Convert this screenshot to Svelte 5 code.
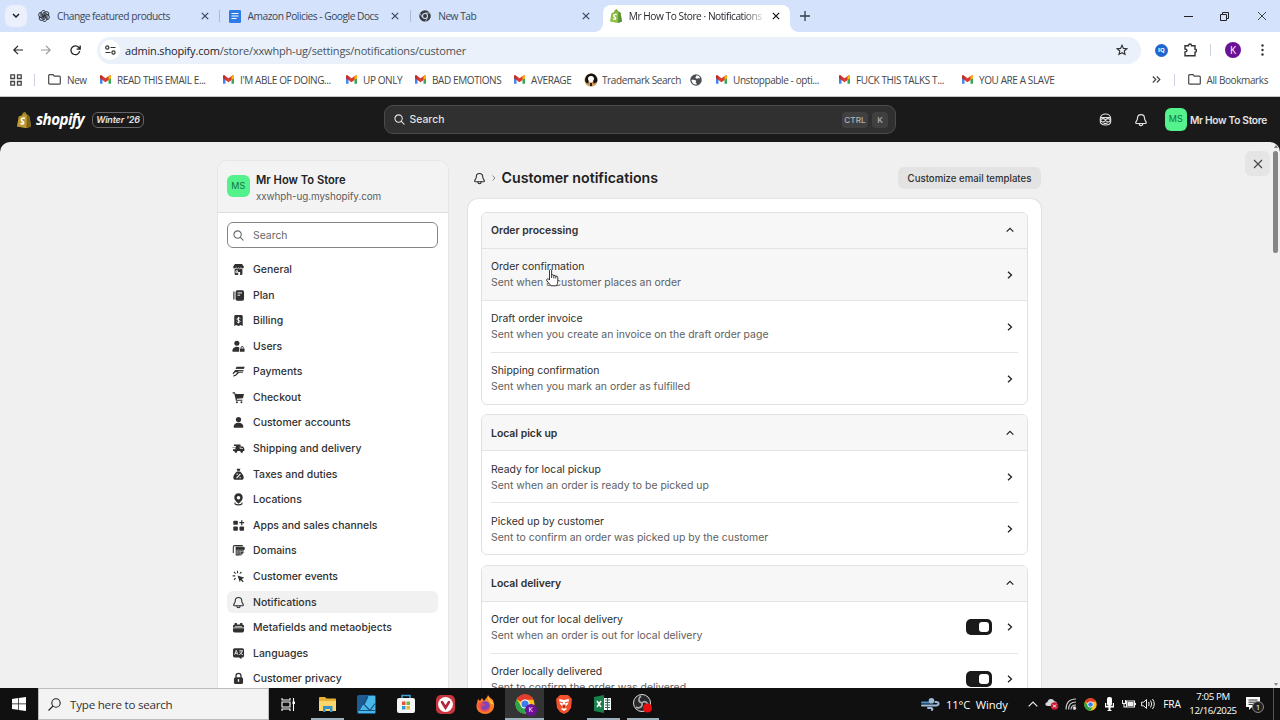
<script>
  const gmail = '<svg width="11" height="9" viewBox="0 0 22 17"><path d="M0 3v14h5V7z" fill="#4285f4"/><path d="M17 7v10h5V3z" fill="#34a853"/><path d="M0 2v4l11 8 11-8V2c0-2-2-2.6-4-1.200L11 6 4 .8C2-.6 0 0 0 2z" fill="#d93a32"/><path d="M17 2l3-2q2 .3 2 3v3l-5 3.500z" fill="#fbbc04"/><path d="M0 2q0-2 2-2l3 2v7L0 6z" fill="#b92f2b"/></svg>';
  const folder = '<svg width="13" height="11" viewBox="0 0 13 11" fill="none" stroke="#474747" stroke-width="1.200"><path d="M.7 9.200V1.700q0-1 1-1H5l1.300 1.500h5q1 0 1 1v6q0 1-1 1H1.700q-1 0-1-1z"/></svg>';
  const chromeLogo = '<svg width="14" height="14" viewBox="0 0 24 24"><circle cx="12" cy="12" r="11.500" fill="#fbc116"/><path d="M12 12L2 6.300a11.500 11.500 0 0 1 20-.1L21.500 7H12z" fill="#e33b2e"/><path d="M2 6.300a11.500 11.500 0 0 0 9.500 17.200L16.500 15l-9 0z" fill="#2ba24c"/><circle cx="12" cy="12" r="5.500" fill="#fff"/><circle cx="12" cy="12" r="4.300" fill="#3b7ded"/></svg>';
  const monoChrome = '<svg width="12" height="12" viewBox="0 0 24 24"><circle cx="12" cy="12" r="11.500" fill="#35383d"/><path d="M12 6h10M6.800 15L1.800 6.500M17.200 15l-5 8.500" stroke="#d4e3fb" stroke-width="1.500"/><circle cx="12" cy="12" r="6" fill="#d4e3fb"/><circle cx="12" cy="12" r="3.900" fill="#35383d"/></svg>';
  const petal = 'M12 12L6.500 8.800V5.500a4.600 4.600 0 0 1 8.500-2.300L9.500 6.500v7';
  const gpt = `<svg width="12" height="12" viewBox="0 0 24 24" fill="none" stroke="#333a43" stroke-width="1.900">${[0, 60, 120, 180, 240, 300].map((r) => `<path d="${petal}" transform="rotate(${r} 12 12)"/>`).join('')}</svg>`;
  const docs = '<svg width="12" height="13" viewBox="0 0 12 13"><rect width="12" height="13" rx="1.300" fill="#2f7be6"/><path d="M2.500 3.500h7M2.500 6h7M2.500 8.500h5" stroke="#fff" stroke-width="1.200"/></svg>';
  const bag = (a, b) => `<svg width="12" height="14" viewBox="0 0 24 28"><path d="M3 8l5-1.500C9 2 12 0 14.500 1l2 3.500L18 5l3 2.500L24 25l-8 3L0 25z" fill="${a}"/><path d="M17 5l4 2.500L24 25l-8 3z" fill="${b}"/><path d="M8.500 7.500C9 4.500 11 2 13.500 2.500L14.500 6" fill="none" stroke="${b}" stroke-width="1.200"/><path d="M13.500 11.500C10 9.800 7 11.500 7.500 14c.4 2.200 4.200 2.600 4 5-.2 2-3 2.200-5.500.5" fill="none" stroke="#fff" stroke-width="2.600"/></svg>`;
  const bell = (c, s) => `<svg width="${s}" height="${s}" viewBox="0 0 20 20" fill="none" stroke="${c}" stroke-width="1.700" stroke-linejoin="round" stroke-linecap="round"><path d="M10 2.300C6.700 2.300 5 4.800 5 7.500c0 3.500-2.500 4.400-2.500 6.300 0 .9.600 1.200 1.300 1.200h12.400c.7 0 1.300-.3 1.300-1.200 0-1.900-2.500-2.800-2.500-6.300 0-2.700-1.700-5.200-5-5.200z"/><path d="M7.500 15c0 1.700 1 3 2.500 3s2.500-1.300 2.500-3"/></svg>`;
  const glass = (c, s) => `<svg width="${s}" height="${s}" viewBox="0 0 12 12" fill="none" stroke="${c}" stroke-width="1.200" stroke-linecap="round"><circle cx="5" cy="5" r="4"/><path d="M8 8l3 3"/></svg>`;

  const tabs = [
    { icon: gpt, text: 'Change featured products' },
    { icon: docs, text: 'Amazon Policies - Google Docs' },
    { icon: monoChrome, text: 'New Tab' },
    { icon: bag('#8fbe46', '#5c9138'), text: 'Mr How To Store · Notifications', active: true }
  ];

  const trade = '<svg width="14" height="14" viewBox="0 0 28 28"><circle cx="14" cy="14" r="13" fill="#d3a264"/><path d="M14 1a13 13 0 0 0-9 21l4 2V9h9l1 13 4 1A13 13 0 0 0 14 1z" fill="#161310"/><path d="M2 18q12 8 24 0-3 9-12 9T2 18z" fill="#d3a264"/><path d="M14 6c-4 0-6 2.500-6 5.500 0 3 3 4 3.500 7h5c.5-3 3.500-4 3.500-7C20 8.500 18 6 14 6z" fill="#fff"/><path d="M12 20h4v6h-4z" fill="#2b2118"/></svg>';
  const globe = '<svg width="12" height="12" viewBox="0 0 24 24"><circle cx="12" cy="12" r="11.500" fill="#4b4f54"/><path d="M3 12c4-1 6 1 9 1 1 2-1 3-1 4 2 1 3 2 2 4-5 1-10-3-10-9zM12 4c3-2 7 0 8 4-2 2-3 0-5 1-1 1-3 0-4-1-1-2 2-2 1-4z" fill="#fff"/></svg>';
  const bookmarks = [
    { icon: folder, text: 'New', w: 52 },
    { icon: gmail, text: 'READ THIS EMAIL E...', w: 123 },
    { icon: gmail, text: "I'M ABLE OF DOING...", w: 123 },
    { icon: gmail, text: 'UP ONLY', w: 69 },
    { icon: gmail, text: 'BAD EMOTIONS', w: 99 },
    { icon: gmail, text: 'AVERAGE', w: 70 },
    { icon: trade, text: 'Trademark Search', w: 106 },
    { icon: globe, text: '', w: 26 },
    { icon: gmail, text: 'Unstoppable - opti...', w: 123 },
    { icon: gmail, text: 'FUCK THIS TALKS T...', w: 123 },
    { icon: gmail, text: 'YOU ARE A SLAVE', w: 100 }
  ];

  const nav = [
    ['General', '<path d="M4.500 1.500h11L18.500 6c0 1.500-1 2.500-2.500 2.800V16.500a2 2 0 0 1-2 2h-1.500v-4.500h-3v4.500H6a2 2 0 0 1-2-2V8.800C2.500 8.500 1.500 7.500 1.500 6z"/><path d="M2 7.500q2.300 3 4.300 0 1.800 3 3.700 0 1.900 3 3.700 0 2 3 4.300 0M6 12h2.500v3H6z" fill="none" stroke="#fff" stroke-width="1.300"/>'],
    ['Plan', '<path d="M2 4h1.800v12H2zM8 2h8a2.500 2.500 0 0 1 2.500 2.500v11A2.500 2.500 0 0 1 16 18H8a2.500 2.500 0 0 1-2.500-2.500v-11A2.500 2.500 0 0 1 8 2z"/><path d="M8.500 6h7M8.500 9.500h4" stroke="#fff" stroke-width="1.500"/>'],
    ['Billing', '<path d="M3.500 3.500Q3.500 1.500 5.500 1.500h9q2 0 2 2V18.500l-3.200-1.500-3.300 1.500L6.700 17l-3.200 1.500z"/><path d="M12.800 7C11.500 5.500 7.500 6 7.500 8s5 1.200 5 3.300-3.800 2.300-5.200.6M10 4.500v10" fill="none" stroke="#fff" stroke-width="1.400"/>'],
    ['Users', '<circle cx="7.500" cy="5" r="3.900"/><path d="M.5 17c0-4 3-6.500 7-6.500 1.700 0 3 .4 3.800 1.200L11 18H1.500q-1 0-1-1zM12.300 13h7v5h-7z"/><path d="M14 13v-1.500q0-1.500 1.700-1.500t1.700 1.500V13" fill="none" stroke="#303030" stroke-width="1.500"/>'],
    ['Payments', '<path d="M7 2.500h12.500l-1.300 3.700H5.500zM5 7.500h13l-1.500 4.500H11L5.500 17 1.500 17.500l1-1.900 3-.8 3-3.600H5l-3 3-1.200-1.700z"/><path d="M6 6.700h12M9 9.800h8" stroke="#fff"/>'],
    ['Checkout', '<path d="M1 2h3.500l.8 2.500H18.500L16.800 11l-9.600 1 .3 1.300H16V15H6L3.500 3.700H1z"/><circle cx="7.500" cy="17.300" r="1.500"/><circle cx="14.500" cy="17.300" r="1.500"/>'],
    ['Customer accounts', '<circle cx="10" cy="5.500" r="4"/><path d="M2.500 17c0-4 2.500-6.500 7.500-6.500s7.500 2.500 7.500 6.500q0 1.200-1.200 1.200H3.700q-1.200 0-1.200-1.200z"/>'],
    ['Shipping and delivery', '<path d="M3 4h10l.6 3H17l2 3.500V14h-2a2 2 0 0 1-4 0H8a2 2 0 0 1-4 0H1.500V11H5V9H1V7.500h5V6H3z"/><circle cx="6" cy="14.500" r="1.900"/><circle cx="15" cy="14.500" r="1.900"/><path d="M1 9h5M12.500 7v3H17" fill="none" stroke="#fff"/>'],
    ['Taxes and duties', '<path d="M7 1h6l-1.500 3.500h-3zM7.500 5.500h5C15 8 18 11 18 14.500c0 2.500-1.500 3.500-3 3.500H5c-1.500 0-3-1-3-3.500C2 11 5 8 7.500 5.500z"/><path d="M13 9l-6 6.500M7 9.500h1.800M11.500 15h2" stroke="#fff" stroke-width="1.700"/>'],
    ['Locations', '<path fill-rule="evenodd" d="M10 .5C6 .5 3.500 3.300 3.500 7c0 3.600 3 6.500 6.500 9.500 3.500-3 6.500-5.900 6.500-9.500 0-3.700-2.500-6.500-6.500-6.500zm0 4a2.700 2.700 0 1 1 0 5.400 2.700 2.700 0 0 1 0-5.400z"/><path d="M5 14.500q-2 3.700 5 3.700t5-3.700" fill="none" stroke="#303030" stroke-width="1.700"/>'],
    ['Apps and sales channels', '<rect x="2" y="2.500" width="7" height="6.500" rx="1.500"/><rect x="2" y="11.500" width="7" height="6.500" rx="1.500"/><rect x="11.500" y="11.500" width="7" height="6.500" rx="1.500"/><path d="M15 2v7.500M11.300 5.700h7.400" stroke="#303030" stroke-width="1.900"/>'],
    ['Domains', '<path d="M2 14V4.500Q2 2.500 4 2.500h12.500M18.500 9V6q0-1-1-1h-11v12h4" fill="none" stroke="#303030" stroke-width="1.600"/><path d="M6 5h13v4H6z"/><path d="M8 9h10v3l-5 6-5-1z" opacity=".75"/><path d="M12 11l7.500 2-3 1.600-1.500 3.400z" stroke="#fff" stroke-width=".6"/>'],
    ['Customer events', '<path d="M8.500 8.500L19 12l-4 2 3 3.500-1.500 1.300-3-3.300L12 19z"/><path d="M8.500 1v4M3 3l2.600 2.600M1 9h4M3 15l2.600-2.600M14.500 3L12 5.600" stroke="#303030" stroke-width="1.700"/>'],
    ['Notifications', ''],
    ['Metafields and metaobjects', '<path d="M4 3h3.500v2.500h5V3H16v2.500q2.500.3 2.500 2.500v2h-17V8q0-2.200 2.500-2.500zM1.500 11.300h17V15q0 2.500-2.500 2.500H4Q1.500 17.500 1.500 15z"/><path d="M4.500 8.500h11" stroke="#fff"/>'],
    ['Languages', '<path d="M4 2h12q2.500 0 2.500 2.500v9Q18.500 16 16 16h-1.500v3L11 16H4q-2.500 0-2.500-2.500v-9Q1.500 2 4 2z"/><path d="M4 12l2.500-7L9 12M5 10h3M11 6h6M14 4.500V6M16 6q-1 4-5 6M12 8q1.500 3 5 4" fill="none" stroke="#fff" stroke-width="1.200"/>'],
    ['Customer privacy', '<rect x="3" y="8" width="14" height="10.500" rx="2.500"/><path d="M6.200 9V5.500Q6.200 2 10 2t3.800 3.500V9" fill="none" stroke="#303030" stroke-width="2"/><path d="M10 11v4" stroke="#fff" stroke-width="2"/>']
  ];

  const sections = [
    { title: 'Order processing', rows: [
      { t: 'Order confirmation', d: 'Sent when a customer places an order', hover: true },
      { t: 'Draft order invoice', d: 'Sent when you create an invoice on the draft order page' },
      { t: 'Shipping confirmation', d: 'Sent when you mark an order as fulfilled' } ] },
    { title: 'Local pick up', rows: [
      { t: 'Ready for local pickup', d: 'Sent when an order is ready to be picked up' },
      { t: 'Picked up by customer', d: 'Sent to confirm an order was picked up by the customer' } ] },
    { title: 'Local delivery', rows: [
      { t: 'Order out for local delivery', d: 'Sent when an order is out for local delivery', toggle: true },
      { t: 'Order locally delivered', d: 'Sent to confirm the order was delivered', toggle: true } ] }
  ];

  const apps = [
    { icon: '<svg width="15" height="13" viewBox="0 0 15 13" fill="none" stroke="#fff" stroke-width="1.100"><path d="M1 0v2h8V0M1 13v-2h8v2M1 4h8v5H1zM12.500 0v13"/><path d="M11.500 3.500h2.500v2.500h-2.500z" fill="#fff" stroke="none"/></svg>' },
    { icon: '<svg width="17" height="15" viewBox="0 0 17 15"><path d="M0 1q0-1 1-1h5l1.500 1.500H16q1 0 1 1V14H0z" fill="#e9b035"/><path d="M0 4h17v10H0z" fill="#fbd66b"/><path d="M4 15V9h9.500v6H11v-3H6.500v3z" fill="#3b91cc"/></svg>', state: 'open' },
    { icon: '<svg width="19" height="19" viewBox="0 0 19 19"><rect width="19" height="19" rx="2" fill="#1c5c93"/><path d="M10.500 1H18v17H1.500L1 16z" fill="#48b8ea"/><path d="M10.500 1L2 15.500h16M11 1.500l-4 8 6 6 5-7" fill="none" stroke="#1a4f80" stroke-width="1.200"/></svg>' },
    { icon: '<svg width="20" height="20" viewBox="0 0 20 20"><path d="M6 5V1.500h8V5" fill="none" stroke="#3aa4d8" stroke-width="1.500"/><rect x="1" y="4" width="18" height="15" rx="2" fill="#f4f5f7"/><path d="M6 7.500h3.500V11H6z" fill="#e65332"/><path d="M10.500 7.500H14V11h-3.500z" fill="#75b83b"/><path d="M6 12h3.500v3.500H6z" fill="#2b9ad6"/><path d="M10.500 12H14v3.500h-3.500z" fill="#f3b52a"/></svg>' },
    { icon: '<svg width="19" height="19" viewBox="0 0 19 19"><rect width="19" height="19" rx="5" fill="#c7353f"/><circle cx="9.500" cy="9.500" r="7.400" fill="#fff"/><path d="M6 7l3.500 5.700L13 7" fill="none" stroke="#b32636" stroke-width="2.600" stroke-linecap="round"/></svg>' },
    { icon: '<svg width="19" height="19" viewBox="0 0 19 19"><path d="M2 4l2 2 2-3 2 3c2-3 3-3 4-6 2 3 4 4 5 5l1 4c1 6-4 10-9 10C3 19-1 14 1 8z" fill="#ff7b26"/><path d="M12 1c1 4 5 4 6 9-1-1-2-1-3-1-1-3-4-3-3-8z" fill="#ffc337"/><circle cx="9" cy="11" r="4.800" fill="#7b46bb"/><path d="M1 9c4-3 7-1 9 1-3 0-3 3-6 3 3 3 7 2 10-2 1 8-11 9-13-2z" fill="#fb4452" opacity=".7"/></svg>' },
    { icon: '', state: 'active' },
    { icon: '<svg width="16" height="19" viewBox="0 0 16 19"><path d="M4 0h8l2 2 2 2-1 9-3 4-4 2-4-2-3-4L0 4l2-2z" fill="#f3502b"/><path d="M3 4l5 1 5-1-1 5-3 3 2 2-3 2-3-2 2-2-3-3z" fill="#fff"/><path d="M4 7l3 1M12 7L9 8M7 10h2v3H7z" stroke="#f3502b" stroke-width="1.200"/></svg>' },
    { icon: '<svg width="18" height="18" viewBox="0 0 18 18"><path d="M9 3h8v12H9z" fill="#fff"/><path d="M11 5h5M11 7.500h5M11 10h5M11 12.500h5M13.500 3v12" stroke="#20784a"/><path d="M0 2l10-2v18L0 16z" fill="#18804a"/><path d="M3 6l4 6M7 6l-4 6" stroke="#fff" stroke-width="1.500"/></svg>', state: 'open' },
    { icon: '<svg width="20" height="20" viewBox="0 0 20 20"><circle cx="9" cy="9" r="8.500" fill="#28272c" stroke="#d9d9d9"/><path d="M9 9C5 8 5 4 8 2M9 9c3-3 6 0 6 3M9 9c1 4-3 6-6 4" fill="none" stroke="#a9a9a9" stroke-width="1.700"/><circle cx="14.500" cy="14" r="4.500" fill="#e80c0c"/></svg>', state: 'open' }
  ];
</script>

{#snippet cross(s, c, w)}
  <svg width={s} height={s} viewBox="0 0 10 10" stroke={c} stroke-width={w}><path d="M1 1l8 8M9 1L1 9" /></svg>
{/snippet}

<div class="screen">
  <header class="tabstrip">
    <button class="tabmenu" aria-label="Search tabs"><svg width="8" height="6" viewBox="0 0 8 6" fill="none" stroke="#1b1f26" stroke-width="1.5"><path d="M1 1l3 3 3-3" /></svg></button>
    {#each tabs as tab}
      <div class="tab" class:active={tab.active}>
        <span class="fav">{@html tab.icon}</span>
        <span class="label">{tab.text}</span>
        <span class="close">{@render cross(8, tab.active ? '#111' : '#3b4657', 1.5)}</span>
      </div>
    {/each}
    <svg class="plus" width="10" height="10" viewBox="0 0 10 10" stroke="#333d4c" stroke-width="1.3"><path d="M5 0v10M0 5h10" /></svg>
    <div class="winctl">
      <svg width="9" height="9" viewBox="0 0 9 9" stroke="#222"><path d="M0 4.500h9" /></svg>
      <svg width="9" height="9" viewBox="0 0 9 9" fill="none" stroke="#222"><path d="M.5 2.500h6v6h-6zM2.500 2V.5h6v6H7" /></svg>
      {@render cross(10, '#333', 0.9)}
    </div>
  </header>

  <div class="toolbar">
    <div class="navbtns">
      <svg width="10" height="10" viewBox="0 0 10 10" fill="none" stroke="#222" stroke-width="1.2"><path d="M10 5H1M5 .8L.8 5 5 9.200" /></svg>
      <svg width="10" height="10" viewBox="0 0 10 10" fill="none" stroke="#999" stroke-width="1.2"><path d="M0 5h9M5 .8L9.200 5 5 9.200" /></svg>
      <svg width="11" height="11" viewBox="0 0 11 11" fill="none" stroke="#222" stroke-width="1.3"><path d="M9.700 6.200A4.400 4.400 0 1 1 8.800 2.500L10 3.800M10.200 .5v3.600H6.600" /></svg>
    </div>
    <div class="urlbar">
      <span class="site"><svg width="11" height="10" viewBox="0 0 11 10" fill="none" stroke="#333" stroke-width="1.2"><circle cx="2.300" cy="2.500" r="1.600" /><circle cx="8.500" cy="7.500" r="1.600" /><path d="M5.500 2.500h5M.5 7.500h5" /></svg></span>
      <span class="url"><b>admin.shopify.com</b>/store/xxwhph-ug/settings/notifications/customer</span>
      <svg width="12" height="12" viewBox="0 0 24 24" fill="none" stroke="#333" stroke-width="2.3"><path d="M12 2.500l2.900 6.300 6.600.7-5 4.500 1.500 6.800-6-3.500-6 3.500 1.500-6.800-5-4.500 6.600-.7z" /></svg>
    </div>
    <div class="ext">
      <span class="iq">IQ</span>
      <svg width="13" height="14" viewBox="0 0 13 14" fill="none" stroke="#333" stroke-width="1.4"><path d="M1 2.700h3.500q0-1.700 1.500-1.700t1.500 1.700H11v3.500q1.500 0 1.500 1.500T11 9.200v3.600H1V9q2-.2 2-1.500T1 6z" /></svg>
      <i class="bar"></i>
      <span class="avatar">K</span>
      <svg width="3" height="12" viewBox="0 0 3 12" fill="#333"><circle cx="1.500" cy="1.500" r="1.200" /><circle cx="1.500" cy="6" r="1.200" /><circle cx="1.500" cy="10.500" r="1.200" /></svg>
    </div>
  </div>

  <div class="bookmarks">
    <svg class="grid" width="12" height="12" viewBox="0 0 12 12" fill="none" stroke="#444" stroke-width="1.3"><path d="M.8.8h3.700v3.700H.8zM7.500.8h3.700v3.700H7.500zM.8 7.500h3.700v3.700H.8zM7.500 7.500h3.700v3.700H7.500z" /></svg>
    <i class="bar"></i>
    {#each bookmarks as b}
      <span class="bm" style:width="{b.w}px">{@html b.icon}<span>{b.text}</span></span>
    {/each}
    <span class="bmright">
      <svg width="9" height="7" viewBox="0 0 9 7" fill="none" stroke="#444" stroke-width="1.2"><path d="M.8.5l3 3-3 3M4.800.5l3 3-3 3" /></svg>
      <i class="bar"></i>{@html folder}<span>All Bookmarks</span>
    </span>
  </div>

  <div class="topbar">
    <div class="brand">{@html bag('#bd9a32', '#80631a')}<span class="word">shopify</span><span class="edition">Winter '26</span></div>
    <div class="gsearch">{@html glass('#e3e3e3', 11)}<span>Search</span><kbd class="ctrl">CTRL</kbd><kbd>K</kbd></div>
    <div class="acct">
      <svg width="13" height="13" viewBox="0 0 20 20" fill="none" stroke="#e3e3e3" stroke-width="1.700"><path d="M2 9c0-5 4-7.500 8-7.500S18 4 18 9v4c0 3-3 5.500-8 5.500S2 16 2 13z" /><path d="M2.500 7h15M3 9.500c2-1 5-1 7 1 2-2 5-2 7-1v3c-2 2-5 1.500-7-1-2 2.500-5 3-7 1zM7 15.500q3 1.500 6 0" /></svg>
      {@html bell('#e3e3e3', 14)}
      <span class="ms">MS</span><span class="name">Mr How To Store</span>
    </div>
  </div>

  <div class="stage">
    <main class="page">
      <aside class="side">
        <div class="shop"><span class="ms">MS</span><div><strong>Mr How To Store</strong><small>xxwhph-ug.myshopify.com</small></div></div>
        <div class="find">{@html glass('#666', 11)}<span>Search</span></div>
        <nav>
          {#each nav as [label, path]}
            <a class:current={label === 'Notifications'}>
              {#if path}<svg width="13" height="13" viewBox="0 0 20 20" fill="#303030">{@html path}</svg>{:else}{@html bell('#303030', 13)}{/if}
              <span>{label}</span>
            </a>
          {/each}
        </nav>
      </aside>
      <section class="content">
        <div class="head">
          {@html bell('#303030', 13)}
          <svg class="crumb" width="4" height="6" viewBox="0 0 4 6" fill="none" stroke="#888"><path d="M.5.5L3 3 .5 5.500" /></svg>
          <h1>Customer notifications</h1>
          <button>Customize email templates</button>
        </div>
        <div class="card">
          {#each sections as s}
            <div class="group">
              <div class="gtitle">{s.title}<svg width="8" height="6" viewBox="0 0 8 6" fill="none" stroke="#222" stroke-width="1.2"><path d="M.7 4.700L4 1.300l3.300 3.400" /></svg></div>
              {#each s.rows as r}
                <div class="row" class:hover={r.hover}>
                  <div class="txt"><span>{r.t}</span><small>{r.d}</small></div>
                  {#if r.toggle}<span class="toggle"></span>{/if}
                  <svg width="6" height="8" viewBox="0 0 6 8" fill="none" stroke="#222" stroke-width="1.3"><path d="M1 .7L4.500 4 1 7.300" /></svg>
                </div>
              {/each}
            </div>
          {/each}
        </div>
      </section>
      <button class="x" aria-label="Close">{@render cross(10, '#444', 1.1)}</button>
      <div class="scroll"><i class="up"></i><i class="thumb"></i><i class="down"></i></div>
      <svg class="cursor" width="13" height="18" viewBox="0 0 13 18" fill="#fff" stroke="#222" stroke-width=".9" stroke-linejoin="round"><path d="M3.500 10V1.700q0-1.200 1-1.200t1.100 1.200V6q1.700-.8 2.200.5 1.500-.6 2 .6 1.700-.4 2 1.200V12q0 3-1.500 4.800H5L1 12q-1-1.500.2-2.100T3.500 11z" /><path d="M5.600 6v3M7.800 6.500v3M9.800 7v2.500" /></svg>
    </main>
  </div>

  <footer class="taskbar">
    <div class="start"><svg width="14" height="14" viewBox="0 0 14 14" fill="#fff"><path d="M0 2l6-.9v5.500H0zM6.700 1L14 0v6.600H6.700zM0 7.300h6v5.500L0 12zM6.700 7.300H14V14l-7.300-1z" /></svg></div>
    <div class="tsearch"><svg width="13" height="13" viewBox="0 0 13 13" fill="none" stroke="#222" stroke-width="1.100"><circle cx="8" cy="5" r="4.200" /><path d="M5 8L.5 12.500" /></svg><span>Type here to search</span></div>
    {#each apps as a}
      <div class="app {a.state ?? ''}">
        {#if a.state === 'active'}<span class="chrome">{@html chromeLogo}<b>K</b></span>{:else}{@html a.icon}{/if}
      </div>
    {/each}
    <div class="tray">
      <svg width="19" height="14" viewBox="0 0 19 14" fill="none" stroke="#9ebbdc" stroke-width="2" stroke-linecap="round"><path d="M1 5.500h8" stroke="#4f8fd0" /><path d="M1 8.500h14.500q2.500-.5 2-2.200T14.500 5M7 11h3q2 .5 1 2" /><circle cx="10.500" cy="3.800" r="1.800" fill="#9ebbdc" /></svg>
      <span class="weather">11°C&nbsp; Windy</span>
      <svg width="10" height="6" viewBox="0 0 10 6" fill="none" stroke="#eee" stroke-width="1.200"><path d="M.7 5.300L5 1l4.300 4.300" /></svg>
      <svg width="14" height="12" viewBox="0 0 14 12"><path d="M3 8Q0 8 .5 5.500 1 4 2.500 4 3 1 6 1q2.500 0 3.300 2.300Q12 3.500 12 6v2z" fill="#d5d7da" /><circle cx="9.500" cy="8" r="3.800" fill="#c81932" /><path d="M8 6.500l3 3M11 6.500l-3 3" stroke="#fff" /></svg>
      <svg width="12" height="12" viewBox="0 0 12 12" fill="none" stroke="#ccc" stroke-width="1.100"><path d="M1 11.500Q1 1 11 1M3.500 11.500Q3.500 4 11 4M6 11.500Q6 7 11 7" /><circle cx="9.500" cy="10" r="1.300" fill="#eee" /></svg>
      <span class="ic">{@html chromeLogo}</span>
      <svg width="9" height="14" viewBox="0 0 9 14" fill="#fff"><rect x="2" width="5" height="9" rx="2" /><path d="M0 6h1.200v3h6.600V6H9v4.500H5.500V13h1V14h-4v-1h1v-2.500H0z" /></svg>
      <svg width="14" height="10" viewBox="0 0 14 10" fill="none" stroke="#eee" stroke-width="1.100"><path d="M4.500 2h8v6h-8zM.5 1v3.500h3V1M2 4.500V8h2M13.500 4v2" /><path d="M6 3.500h5v3H6z" fill="#eee" /></svg>
      <svg width="14" height="12" viewBox="0 0 14 12" fill="none" stroke="#eee" stroke-width="1"><path d="M.6 4.200h2L5.500 1.500v9L2.600 7.800h-2zM7.500 4q1.400 2 0 4M9.500 2.500q2.500 3.500 0 7M11.500 1q3.500 5 0 10" /></svg>
      <span class="lang">FRA</span>
      <span class="clock"><span>7:05 PM</span><span>12/16/2025</span></span>
      <span class="notif"><svg width="14" height="14" viewBox="0 0 14 14"><path d="M0 0h14v10H6l-3 3v-3H0z" fill="#fff" /><path d="M2.500 3h9M2.500 5.200h9M2.500 7.400h6" stroke="#111" stroke-width=".9" /></svg><b>1</b></span>
      <i class="edge"></i>
    </div>
  </footer>
</div>

<style>
  :global(body) { margin: 0; overflow: hidden; }
  :global(svg) { display: block; flex: none; }
  * { box-sizing: border-box; }
  button { border: 0; padding: 0; font: inherit; }
  .screen { width: 1280px; height: 720px; display: flex; flex-direction: column; overflow: hidden; font-family: "Open Sans", "Noto Sans", sans-serif; font-size: 11px; color: #303030; background: #fff; white-space: nowrap; }

  .tabstrip { height: 32px; flex: none; display: flex; align-items: center; background: #d4e3fb; padding-left: 5px; }
  .tabmenu { width: 22px; height: 22px; border-radius: 7px; background: #eaf1fc; display: grid; place-items: center; margin-right: 3px; }
  .tab { width: 190.600px; height: 100%; display: flex; align-items: center; padding: 0 12px 0 8px; position: relative; color: #3b4657; }
  .tab:not(.active)::after { content: ""; position: absolute; right: .5px; top: 10px; width: 1px; height: 12px; background: #a9bcd9; }
  .tab:nth-of-type(3)::after { display: none; }
  .tab.active { width: 187px; height: 27px; align-self: flex-end; background: #fff; border-radius: 8px 8px 0 0; margin-left: 1px; padding: 0 10px 5px 7px; color: #1f2329; }
  .tab.active::before, .tab.active::after { content: ""; position: absolute; bottom: 0; width: 8px; height: 8px; }
  .tab.active::before { left: -8px; background: radial-gradient(circle at 0 0, transparent 7.500px, #fff 8px); }
  .tab.active::after { right: -8px; background: radial-gradient(circle at 100% 0, transparent 7.500px, #fff 8px); }
  .fav { width: 12px; margin-right: 7px; }
  .label { flex: 1; overflow: hidden; font-size: 10.200px; letter-spacing: -.48px; }
  .active .label { -webkit-mask-image: linear-gradient(90deg, #000 114px, transparent 138px); mask-image: linear-gradient(90deg, #000 114px, transparent 138px); }
  .close { margin-left: 5px; }
  .plus { margin-left: 10px; }
  .winctl { margin-left: auto; display: flex; align-items: center; gap: 27.500px; padding-right: 13.500px; }

  .toolbar { height: 33px; flex: none; display: flex; align-items: center; padding: 0 15px 0 12.500px; background: #fff; }
  .navbtns { display: flex; align-items: center; gap: 18.500px; width: 84.500px; }
  .urlbar { width: 1044px; height: 27px; border-radius: 14px; background: #eaf1fa; display: flex; align-items: center; padding: 0 13px 0 3px; }
  .toolbar > * { margin-top: 3px; }
  .site { width: 20px; height: 20px; border-radius: 50%; background: #fff; display: grid; place-items: center; margin-right: 5px; }
  .url { flex: 1; font-size: 11px; letter-spacing: -.18px; color: #4b5158; }
  .url b { font-weight: 400; color: #1f2328; }
  .ext { display: flex; align-items: center; margin-left: 14px; flex: 1; }
  .iq { width: 13px; height: 13px; border-radius: 50%; background: #1f67cf; color: #fff; font-size: 6px; font-weight: 700; display: grid; place-items: center; margin-right: 16px; }
  .bar { width: 1px; height: 12px; background: #ccd3de; }
  .ext .bar { margin: 0 14px 0 13px; }
  .avatar { width: 16px; height: 16px; border-radius: 50%; background: #6a1297; color: #fff; font-size: 10px; display: grid; place-items: center; margin-right: 20px; }

  .bookmarks { height: 32px; flex: none; display: flex; align-items: center; padding: 0 12px 2px 10px; border-bottom: 1px solid #c8c8c8; font-size: 10px; letter-spacing: -.4px; color: #474747; }
  .bookmarks > .bar { margin: 0 13px 0 12px; }
  .bm { display: flex; align-items: center; gap: 6px; }
  .bm:nth-of-type(7) { gap: 4px; }
  .bmright { margin-left: auto; display: flex; align-items: center; gap: 6px; }
  .bmright .bar { margin: 0 7px; }

  .topbar { height: 45px; flex: none; background: #1a1a1a; display: flex; align-items: center; justify-content: space-between; color: #e3e3e3; font-family: Inter, sans-serif; padding: 0 13px 0 16px; }
  .brand { display: flex; align-items: center; width: 368px; }
  .brand :global(svg) { transform: scale(1.180); margin-left: 2px; }
  .word { font: italic 700 15.200px "Open Sans", sans-serif; letter-spacing: -.6px; color: #fff; margin: 0 6px 2px 6px; width: 50px; }
  .edition { width: 52px; border: 1px solid #666; border-radius: 6px; font-size: 9px; letter-spacing: -.2px; font-weight: 600; font-style: italic; height: 16px; line-height: 14px; text-align: center; }
  .gsearch { width: 512px; height: 29px; border-radius: 9px; border: 1px solid #4b4b4b; background: #303030; display: flex; align-items: center; font-size: 10.400px; font-weight: 500; padding: 0 7px 0 9px; }
  .gsearch span { flex: 1; margin-left: 4.500px; }
  kbd { font: 500 8.200px Inter, sans-serif; height: 16px; width: 16px; border-radius: 4px; background: #404040; color: #b5b5b5; line-height: 16px; text-align: center; }
  .ctrl { margin-right: 4px; width: 26px; }
  .acct { display: flex; align-items: center; width: 371px; justify-content: flex-end; }
  .acct :global(svg) { margin-right: 22px; }
  .acct :global(svg + svg) { margin-right: 17px; }
  .ms { width: 22.500px; height: 22.500px; border-radius: 6px; background: #53f28d; color: #137445; font: 400 9px/22.500px Inter, sans-serif; text-align: center; flex: none; }
  .name { font-size: 10.200px; letter-spacing: -.31px; font-weight: 600; margin-left: 3px; }

  .stage { height: 546px; flex: none; background: #1a1a1a; }
  .page { height: 100%; background: #f0f0f0; border-radius: 10px 10px 0 0; position: relative; overflow: hidden; display: flex; padding: 18.500px 0 0 218px; font-family: Inter, sans-serif; }
  .side { width: 230px; height: 560px; background: #fff; border-radius: 9px 9px 0 0; box-shadow: 0 0 0 .8px #e3e3e3; flex: none; }
  .shop { height: 52px; background: #f3f3f3; border-radius: 9px 9px 0 0; border-bottom: 1px solid #dedede; display: flex; align-items: center; padding: 0 0 0 9px; gap: 6.500px; }
  .shop div { display: grid; padding-top: 4px; }
  .shop strong { font-size: 11.200px; line-height: 16px; font-weight: 600; color: #222; }
  .shop small { font-size: 9.900px; letter-spacing: -.09px; line-height: 16px; color: #5d5d5d; }
  .find { height: 26px; margin: 9.500px 10px 10px 9px; border: 1px solid #858585; border-radius: 6px; display: flex; align-items: center; padding-left: 5px; gap: 9px; font-size: 10.400px; color: #666; }
  nav { display: grid; gap: 3.200px; margin: 0 10px 0 9px; }
  a { height: 22.400px; border-radius: 6px; display: flex; align-items: center; gap: 8px; padding: .6px 0 0 5px; font-size: 10.480px; font-weight: 500; }
  .current { background: #f1f1f1; }

  .content { margin-left: 20px; width: 573px; flex: none; }
  .head { display: flex; align-items: center; height: 35px; padding-left: 5px; color: #202020; }
  .crumb { margin: 0 5.500px 0 6px; }
  h1 { margin: 0; flex: 1; font-size: 14.200px; font-weight: 600; line-height: 20px; }
  .head button { width: 143px; height: 22.500px; border-radius: 6px; background: #e3e3e3; font-size: 9.650px; font-weight: 500; color: #303030; }
  .card { height: 540px; margin-top: 3px; background: #fff; border-radius: 10px; box-shadow: 0 0 0 .8px #e0e0e0, 0 1px 2px #0001; padding: 13.500px 13px; display: flex; flex-direction: column; gap: 9.450px; }
  .group { border: 1px solid #e1e1e1; border-radius: 6px; overflow: hidden; flex: none; }
  .gtitle { height: 36px; background: #f7f7f7; border-bottom: 1px solid #e3e3e3; display: flex; align-items: center; justify-content: space-between; padding: .8px 13.500px 0 9px; font-size: 10.400px; font-weight: 600; }
  .gtitle svg { margin-top: -1px; }
  .row { height: 52px; display: flex; align-items: center; padding: 0 14px 1px 9px; position: relative; }
  .row:last-child { height: 51px; padding-bottom: 0; }
  .row:not(:last-child)::after { content: ""; position: absolute; bottom: 0; left: 9px; right: 9px; height: 1px; background: #e5e5e5; }
  .row.hover { background: #f7f7f7; }
  .row.hover::after { left: 0 !important; right: 0 !important; }
  .txt { display: grid; flex: 1; padding-top: 1.200px; }
  .txt span, .txt small { font-size: 10.450px; line-height: 16px; }
  .txt small { color: #616161; }
  .toggle { width: 26px; height: 16px; background: #1a1a1a; border-radius: 5px; margin-right: 15px; padding: 3px; display: flex; justify-content: flex-end; }
  .toggle::after { content: ""; width: 10px; height: 10px; border-radius: 3px; background: #fff; }
  .x { position: absolute; left: 1245px; top: 9px; width: 25px; height: 25px; border-radius: 6px; background: #e5e5e5; display: grid; place-items: center; }
  .scroll { position: absolute; right: 0; top: 0; width: 9px; height: 100%; display: flex; flex-direction: column; align-items: center; }
  .up { margin-top: 3px; border: 2.500px solid transparent; border-top: 0; border-bottom: 3px solid #777; }
  .thumb { width: 5px; height: 102px; margin-top: 3px; border-radius: 3px; background: #858585; }
  .down { margin-top: auto; margin-bottom: 2px; border: 2.500px solid transparent; border-bottom: 0; border-top: 3px solid #888; }
  .cursor { position: absolute; left: 546px; top: 127px; }

  .taskbar { height: 32px; flex: none; background: #101010; display: flex; color: #fff; }
  .start { width: 38px; display: grid; place-items: center; }
  .tsearch { width: 230.500px; background: #f3f3f3; border: 1px solid #bbb; display: flex; align-items: center; padding-left: 9px; gap: 9px; font-size: 11.600px; letter-spacing: -.22px; color: #333; }
  .app { width: 39.400px; display: grid; place-items: center; position: relative; }
  .app.active { background: #343434; }
  .app.open::after, .app.active::after { content: ""; position: absolute; bottom: 0; left: 3.500px; right: 3.500px; height: 2px; background: #9db0bd; }
  .app.active::after { left: 0; right: 0; }
  .chrome { position: relative; }
  .chrome :global(svg) { width: 20px; height: 20px; }
  .chrome b { position: absolute; right: -2px; bottom: -2px; width: 12px; height: 12px; border-radius: 50%; background: #6a1297; font-size: 7px; font-weight: 400; text-align: center; line-height: 12px; }
  .tray { margin-left: auto; width: 361px; display: grid; grid-template-columns: 22px 82px 20px 17px 21px 19px 19px 19px 20px 28px 54px 26px 1fr; align-items: center; justify-items: center; }
  .weather { font-size: 11.200px; letter-spacing: -.1px; justify-self: start; padding-left: 5px; }
  .ic :global(svg) { width: 13px; height: 13px; }
  .lang { font-size: 10.200px; letter-spacing: -.2px; }
  .clock { display: grid; justify-items: center; font-size: 9.700px; letter-spacing: -.4px; line-height: 14px; }
  .notif { position: relative; }
  .notif b { position: absolute; left: 6px; top: 4px; width: 12px; height: 12px; border-radius: 50%; background: #222; border: 1px solid #888; font-size: 8px; font-weight: 400; line-height: 10px; text-align: center; }
  .edge { width: 1px; height: 32px; background: #555; }
</style>
